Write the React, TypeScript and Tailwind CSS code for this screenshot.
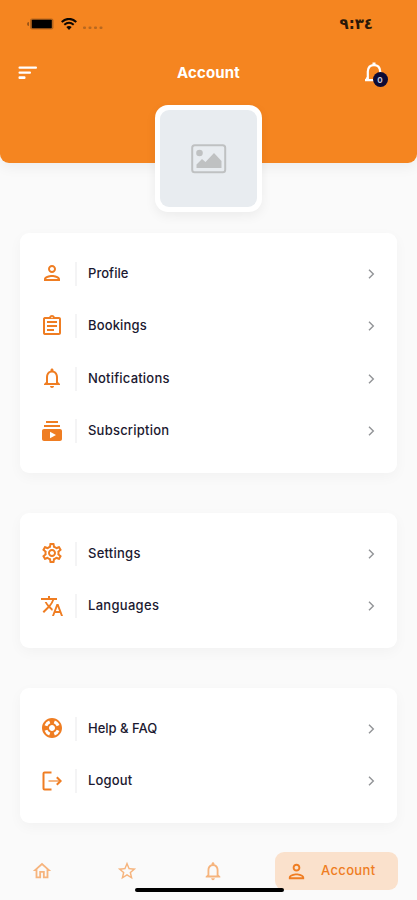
import type { ReactNode } from "react";
import {
    MdOutlineAssignment,
    MdOutlineHome,
    MdOutlineNotifications,
    MdOutlinePerson,
    MdOutlineSettings,
    MdStarOutline,
    MdSubscriptions,
    MdSupport,
    MdTranslate,
} from "react-icons/md";

interface MenuItem {
    label: string;
    icon: ReactNode;
    spacing: string;
}

const LogoutIcon = () => (
    <svg width="24" height="24" viewBox="0 0 24 24" fill="none" stroke="currentColor" strokeWidth="2">
        <path d="M11.500 3.500H4.500a1 1 0 0 0-1 1v15a1 1 0 0 0 1 1h7" />
        <path d="M8.500 12H19" strokeWidth="1.600" opacity="0.7" />
        <path d="m16.800 8.200 3.800 3.800-3.800 3.800" />
    </svg>
);

const sections: MenuItem[][] = [
    [
        { label: "Profile", icon: <MdOutlinePerson size={24} />, spacing: "tracking-[0.05px]" },
        { label: "Bookings", icon: <MdOutlineAssignment size={24} />, spacing: "tracking-[0.15px]" },
        { label: "Notifications", icon: <MdOutlineNotifications size={24} />, spacing: "tracking-[0.2px]" },
        { label: "Subscription", icon: <MdSubscriptions size={24} />, spacing: "tracking-[0.22px]" },
    ],
    [
        { label: "Settings", icon: <MdOutlineSettings size={24} />, spacing: "tracking-[0.25px]" },
        { label: "Languages", icon: <MdTranslate size={24} />, spacing: "tracking-[0.3px]" },
    ],
    [
        { label: "Help & FAQ", icon: <MdSupport size={24} />, spacing: "tracking-[0px]" },
        { label: "Logout", icon: <LogoutIcon />, spacing: "tracking-[0.15px]" },
    ],
];

const StatusBar = () => (
    <div className="flex h-12 items-center justify-between pr-[44px] pl-[27px]">
        <div className="flex items-center">
            <svg width="27" height="12" viewBox="0 0 27 12">
                <path d="M2 4Q0 4 0 6t2 2z" fill="#9b5517" />
                <rect x="3" y="0.500" width="23.500" height="11" rx="2" fill="#b8661c" />
                <rect x="4.800" y="1.800" width="20" height="8.400" rx="0.800" fill="#000" />
            </svg>
            <svg className="ml-[7px]" width="16" height="12" viewBox="0 0 16 12" fill="none" stroke="#0c0703" strokeWidth="2">
                <path d="M.7 4Q8-2.300 15.300 4" />
                <path d="M3.300 6.700Q8 2.700 12.700 6.700" />
                <path d="M5.300 9Q8 6.900 10.700 9L8 12z" fill="#0c0703" stroke="none" />
            </svg>
            <svg className="mt-2 ml-[6px]" width="20" height="4" viewBox="0 0 20 4" fill="#b8681f">
                <rect x="0" y="0.500" width="3" height="2.500" rx="1" />
                <rect x="5.500" y="0.500" width="3" height="2.500" rx="1" />
                <rect x="11" y="0.500" width="3" height="2.500" rx="1" />
                <rect x="16.500" y="0.500" width="3" height="2.500" rx="1" />
            </svg>
        </div>
        <span className="font-['DejaVu_Sans',sans-serif] text-[15px] leading-none font-bold text-[#2a1708]">٩:٣٤</span>
    </div>
);

const Header = () => (
    <header className="h-[163px] rounded-b-[9px] bg-[#f58520] shadow-[0_4px_14px_rgba(0,0,0,0.06)]">
        <StatusBar />
        <div className="grid h-[50px] grid-cols-[1fr_auto_1fr] items-center pr-[28px] pl-[18px]">
            <svg width="20" height="14" viewBox="0 0 20 14" fill="#fff">
                <rect x="0.500" y="0.500" width="18.500" height="2.300" rx="1" />
                <rect x="0.500" y="5.500" width="12.500" height="2.300" rx="1" />
                <rect x="0.500" y="10.300" width="7" height="2.700" rx="1" />
            </svg>
            <h1 className="pl-[10px] text-[15px] font-bold tracking-[0.15px] text-white">Account</h1>
            <div className="relative h-[26px] w-[26px] justify-self-end text-white">
                <svg width="24" height="24" viewBox="0 0 24 24" fill="none" stroke="currentColor" strokeWidth="2.200">
                    <path d="M4.800 20V11.500Q5.200 5.200 11 5.200t6.200 6.300V20" />
                    <path d="M2 20.200H18M4.600 17.500 3 20.200" />
                    <path d="M11 2.500V5" strokeWidth="3" />
                </svg>
                <span className="absolute top-[12px] left-[9.500px] flex h-[15px] w-[15px] items-center justify-center rounded-full bg-[#0d0b35] text-[8px] font-bold text-[#c9c7d6]">
                    0
                </span>
            </div>
        </div>
    </header>
);

const Avatar = () => (
    <div className="relative mx-auto -mt-[58px] h-[107px] w-[107px] rounded-[13px] bg-white p-[5px] shadow-[0_4px_12px_rgba(0,0,0,0.06)]">
        <div className="flex h-full w-full items-center justify-center rounded-[9px] bg-[#e8ecf0]">
            <svg width="36" height="30" viewBox="0 0 36 30" fill="#bfc1c2">
                <rect x="1.200" y="1.200" width="33" height="27" rx="2.500" fill="none" stroke="#bfc1c2" strokeWidth="2" />
                <circle cx="8.500" cy="9" r="3.300" />
                <path d="M5.500 24v-3.500l5.500-5.500 3.500 3 8.500-9 7.500 8v7z" />
            </svg>
        </div>
    </div>
);

const MenuRow = ({ item }: { item: MenuItem }) => (
    <li className="flex h-[52.500px] items-center">
        <span className="mb-[2px] text-[#ef7d22]">{item.icon}</span>
        <span className="mb-px ml-[10.500px] h-6 w-[2px] bg-[#f4f4f5]" />
        <span className={`mb-[2px] ml-[11.500px] flex-1 text-[13px] font-medium text-[#1b1930] ${item.spacing}`}>{item.label}</span>
        <svg className="mb-[1.500px]" width="8" height="12" viewBox="0 0 8 12" fill="none" stroke="#929497" strokeWidth="1.400">
            <path d="m2 1.800 4.300 4.200L2 10.200" />
        </svg>
    </li>
);

const BottomNav = () => (
    <nav className="relative mt-[29px] flex h-[48px] items-start pl-[30.500px] text-[#f6b47d]">
        <div className="flex h-[38px] w-[244.500px] items-center">
            <MdOutlineHome size={22} className="mr-[63.500px]" />
            <MdStarOutline size={22} className="mr-[63.500px]" />
            <MdOutlineNotifications size={22} />
        </div>
        <div className="flex h-[38px] w-[123px] items-center rounded-[9px] bg-[#fae1cc] pl-[10px] text-[#ef7d22]">
            <MdOutlinePerson size={23} />
            <span className="ml-[13px] text-[13px] font-medium tracking-[0.35px]">Account</span>
        </div>
        <div className="absolute top-[36px] left-[134.500px] h-[4px] w-[149px] rounded-full bg-black" />
    </nav>
);

const App = () => {
    return (
        <div className="h-[900px] w-[417px] overflow-hidden bg-[#fafafa] font-['Inter',sans-serif]">
            <Header />
            <Avatar />
            <main className="mt-[21px] flex flex-col gap-10 px-[20px]">
                {sections.map((items) => (
                    <ul
                        key={items[0].label}
                        className="rounded-[9px] bg-white py-[15px] pr-[22px] pl-[20px] shadow-[0_4px_14px_rgba(0,0,0,0.035)]"
                    >
                        {items.map((item) => (
                            <MenuRow key={item.label} item={item} />
                        ))}
                    </ul>
                ))}
            </main>
            <BottomNav />
        </div>
    );
};

export default App;
